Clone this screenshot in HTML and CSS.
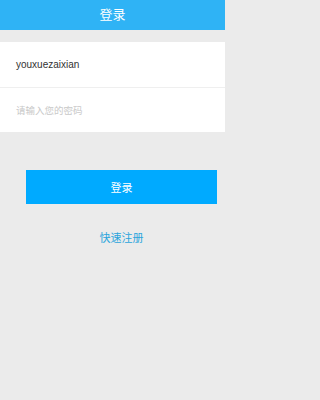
FILE: index.html
```html
<!DOCTYPE html>
<html lang="zh-CN">
<head>
<meta charset="utf-8">
<title>登录</title>
<link rel="stylesheet" href="styles.css">
</head>
<body>
<header class="topbar">
  <h1 class="topbar-title">登录</h1>
</header>
<main class="page">
  <section class="form">
    <div class="row">
      <span class="field-value">youxuezaixian</span>
    </div>
    <div class="row">
      <span class="field-placeholder">请输入您的密码</span>
    </div>
  </section>
  <button class="login-btn" type="button">登录</button>
  <a class="register-link" href="#">快速注册</a>
</main>
</body>
</html>
```
FILE: styles.css
```css
* {
  box-sizing: border-box;
}
html, body {
  margin: 0;
  padding: 0;
}
body {
  width: 225px;
  height: 400px;
  background: #ebebeb;
  font-family: "Liberation Sans", "Noto Sans CJK SC", sans-serif;
  display: flex;
  flex-direction: column;
}
.topbar {
  height: 30px;
  background: #2fb3f5;
  display: flex;
  align-items: center;
  justify-content: center;
  padding-bottom: 2px;
}
.topbar-title {
  margin: 0;
  font-size: 13px;
  font-weight: normal;
  color: #ffffff;
  font-family: "Noto Sans CJK SC", sans-serif;
  line-height: 16px;
}
.page {
  display: flex;
  flex-direction: column;
  padding-top: 12px;
}
.form {
  background: #ffffff;
  display: flex;
  flex-direction: column;
}
.row {
  height: 45px;
  display: flex;
  align-items: center;
  padding-left: 16px;
}
.row + .row {
  border-top: 1px solid #efefef;
}
.field-value {
  font-size: 10px;
  color: #333333;
  font-family: "Liberation Sans", sans-serif;
}
.field-placeholder {
  font-size: 9.5px;
  color: #c9c9c9;
  font-family: "Noto Sans CJK SC", sans-serif;
}
.login-btn {
  margin: 38px 8px 0 26px;
  height: 34px;
  border: none;
  border-radius: 0;
  background: #00aaff;
  color: #ffffff;
  font-size: 11px;
  font-family: "Noto Sans CJK SC", sans-serif;
  padding: 0;
}
.register-link {
  margin: 25px 8px 0 26px;
  text-align: center;
  font-size: 11px;
  line-height: 16px;
  color: #2aa4dc;
  text-decoration: none;
  font-family: "Noto Sans CJK SC", sans-serif;
}
```
